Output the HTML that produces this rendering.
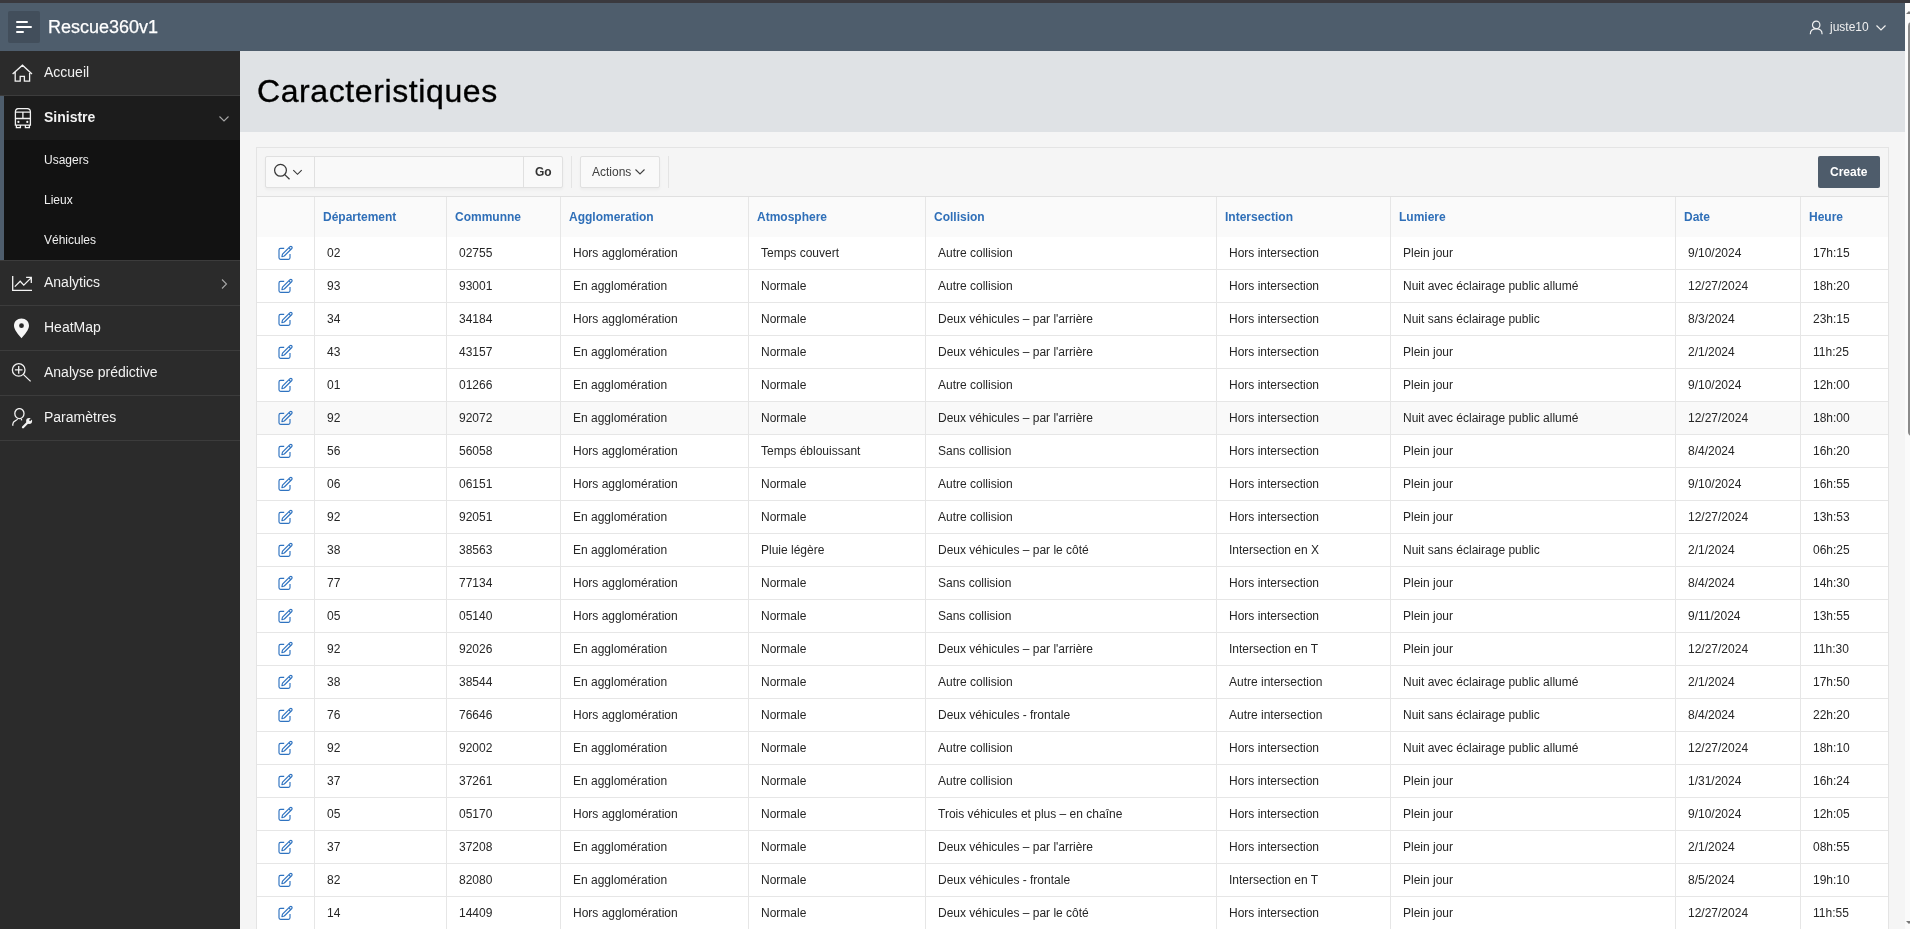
<!DOCTYPE html><html><head><meta charset="utf-8"><title>Caracteristiques</title><style>*{box-sizing:border-box}
html,body{margin:0;padding:0}
body{will-change:transform;width:1910px;height:929px;overflow:hidden;position:relative;background:#f5f5f5;font-family:"Liberation Sans",sans-serif;}
.abs{position:absolute}
#topstrip{position:absolute;left:0;top:0;width:1910px;height:3px;background:#3a393e}
#header{position:absolute;left:0;top:3px;width:1905px;height:48px;background:#4e5d6c}
#burger{position:absolute;left:8px;top:8px;width:32px;height:32px;background:#424e5b;border-radius:2px}
#burger i{position:absolute;left:8px;height:2px;background:#fff;border-radius:1px}
#brand{position:absolute;left:48px;top:9px;font-size:18px;line-height:30px;color:#fff;-webkit-text-stroke:0.25px #fff;white-space:nowrap}
#user{position:absolute;left:1830px;top:14px;font-size:12px;line-height:20px;color:#f0f0f0}
#side{position:absolute;left:0;top:51px;width:240px;height:878px;background:#2b2b2b}
.nav{position:absolute;left:0;width:240px;height:45px;border-bottom:1px solid #3c3c3c;color:#f2f2f2;font-size:14px}
.nav .lbl{position:absolute;left:44px;top:-1px;line-height:44px;white-space:nowrap}
.nav svg{position:absolute}
.sub{position:absolute;left:44px;font-size:12px;line-height:40px;color:#f0f0f0;white-space:nowrap}
#titlebar{position:absolute;left:240px;top:51px;width:1665px;height:81px;background:#dfe2e5}
#title{position:absolute;left:257px;top:66px;font-size:32px;line-height:50px;color:#000;letter-spacing:0.6px;-webkit-text-stroke:0.35px #000;white-space:nowrap}
#region{position:absolute;left:256px;top:147px;width:1633px;height:800px;border:1px solid #e4e4e4;background:#f5f5f5}
#scroll{position:absolute;left:1905px;top:3px;width:5px;height:926px;background:#fbfbfb}
#thumb{position:absolute;left:1908px;top:22px;width:8px;height:414px;background:#8a8a8a;border-radius:4px}
.hdr{position:absolute;left:257px;top:196px;width:1631px;height:41px;background:#fafafa;border-top:1px solid #e0e0e0}
.th{position:absolute;top:197px;line-height:40px;font-size:12px;font-weight:bold;color:#2f6fb8;white-space:nowrap}
.vl{position:absolute;top:197px;width:1px;height:732px;background:#e6e6e6;z-index:3}
.row{position:absolute;left:257px;width:1631px;height:33px;background:#fff;border-bottom:1px solid #e6e6e6}
.row.hov{background:#f9f9f9}
.td{position:absolute;top:0;line-height:32px;font-size:12px;color:#262626;white-space:nowrap;margin-left:-257px}

.ed{position:absolute;left:20px;top:8px;width:18px;height:16px}
.ed svg{display:block}
.tb{position:absolute;height:31px;border:1px solid #e0e0e0;background:#f9f9f9;border-radius:2px;box-shadow:0 2px 3px rgba(0,0,0,.035)}
</style></head><body><div id="topstrip"></div>
<div id="header">
  <div id="burger"><i style="top:10px;width:12px"></i><i style="top:15px;width:16px"></i><i style="top:20px;width:8px"></i></div>
  <div id="brand">Rescue360v1</div>
  <svg class="abs" style="left:1809px;top:17px" width="15" height="16" viewBox="0 0 15 16" fill="none" stroke="#f0f0f0" stroke-width="1.2"><circle cx="7.2" cy="4.9" r="3.7"/><path d="M1.3 14.2Q1.3 9 7.2 8.7Q13.1 9 13.1 14.2"/></svg>
  <div id="user">juste10</div>
  <svg class="abs" style="left:1876px;top:22px" width="10" height="6" viewBox="0 0 10 6" fill="none" stroke="#f0f0f0" stroke-width="1.2"><path d="M0.5 0.5L5 5L9.5 0.5"/></svg>
</div>
<div id="side">
  <div class="nav" style="top:0;background:#2b2b2b">
    <svg style="left:12px;top:13px" width="21" height="19" viewBox="0 0 21 19" fill="none" stroke="#f2f2f2" stroke-width="1.3"><path d="M0.6 9.9L10.46 1.2L20 9.9M3.2 7.6V17.2H8.2V12.3H12.4V17.2H17.6V7.6"/></svg>
    <span class="lbl">Accueil</span>
  </div>
  <div class="abs" style="left:0;top:45px;width:240px;height:164px;background:#121212"></div>
  <div class="abs" style="left:0;top:45px;width:4px;height:164px;background:#4e5d6c"></div>
  <div class="nav" style="top:45px;left:4px;width:236px;height:44px;border:0;background:#1c1c1c">
    <svg style="left:10px;top:12px" width="18" height="21" viewBox="0 0 18 21" fill="none" stroke="#f2f2f2" stroke-width="1.3"><path d="M1.4 17.1V4Q1.4 0.6 4.6 0.6H13.2Q16.4 0.6 16.4 4V17.1Z"/><path d="M1.4 4.1H16.4M1.4 10.5H16.4M8.9 4.1V10.5"/><path d="M2.4 17.1V19.6H6.4V17.1M11.4 17.1V19.6H15.4V17.1"/><circle cx="4.4" cy="13.9" r="1.1" fill="#f2f2f2" stroke="none"/><circle cx="13.3" cy="13.9" r="1.1" fill="#f2f2f2" stroke="none"/></svg>
    <span class="lbl" style="left:40px;font-weight:bold">Sinistre</span>
    <svg style="left:215px;top:20px" width="10" height="6" viewBox="0 0 10 6" fill="none" stroke="#a6a6a6" stroke-width="1.1"><path d="M0.5 0.5L5 5L9.5 0.5"/></svg>
  </div>
  <span class="sub" style="top:89px">Usagers</span>
  <span class="sub" style="top:129px">Lieux</span>
  <span class="sub" style="top:169px">Véhicules</span>
  <div class="abs" style="left:0;top:209px;width:240px;height:1px;background:#3c3c3c"></div>
  <div class="nav" style="top:210px">
    <svg style="left:12px;top:15px" width="21" height="16" viewBox="0 0 21 16" fill="none" stroke="#f4f4f4" stroke-width="1.3"><path d="M0.7 0V14.3H20"/><path d="M2.8 10.6L8.2 5.3L11.8 9.1L19.3 1.6M14.1 1.4H19.3V7"/></svg>
    <span class="lbl">Analytics</span>
    <svg style="left:221px;top:18px" width="7" height="10" viewBox="0 0 7 10" fill="none" stroke="#a6a6a6" stroke-width="1.1"><path d="M1 0.5L5.5 5L1 9.5"/></svg>
  </div>
  <div class="nav" style="top:255px">
    <svg style="left:13px;top:12px" width="17" height="21" viewBox="0 0 17 21" ><path fill="#f7f7f7" d="M8.5 0.5C4.2 0.5 1 3.6 1 7.7C1 11.8 5.3 16.2 8.5 20.3C11.7 16.2 16 11.8 16 7.7C16 3.6 12.8 0.5 8.5 0.5ZM8.5 5.3A2.4 2.4 0 1 1 8.5 10.1A2.4 2.4 0 1 1 8.5 5.3Z"/></svg>
    <span class="lbl">HeatMap</span>
  </div>
  <div class="nav" style="top:300px">
    <svg style="left:11px;top:11px" width="21" height="21" viewBox="0 0 21 21" fill="none" stroke="#f2f2f2" stroke-width="1.3"><circle cx="7.7" cy="7.9" r="6.3"/><path d="M12.3 12.4L19.6 19.4M7.7 4.1V11.7M3.9 7.9H11.5"/></svg>
    <span class="lbl">Analyse prédictive</span>
  </div>
  <div class="nav" style="top:345px">
    <svg style="left:12px;top:12px" width="21" height="21" viewBox="0 0 21 21" fill="none" stroke="#f2f2f2" stroke-width="1.3"><ellipse cx="7.4" cy="5.6" rx="4.6" ry="5"/><path d="M5.6 10.9Q5.3 11.8 3.5 12.6Q0.9 13.8 0.8 16.2V17.8"/><path d="M9.4 10.8L9.6 12.4"/><path d="M11 19.2L15.2 15" stroke-width="2.3" stroke-linecap="round"/><circle cx="17.1" cy="13.1" r="3" fill="#f2f2f2" stroke="none"/><path d="M17.5 12.7L20.6 9.6" stroke="#2b2b2b" stroke-width="1.7"/></svg>
    <span class="lbl">Paramètres</span>
  </div>
</div>
<div id="titlebar"></div>
<div id="title">Caracteristiques</div>
<div id="region"></div>
<div class="tb" style="left:265px;top:156px;width:298px;height:32px;background:#f9f9f9"></div>
<div class="abs" style="left:314px;top:157px;width:1px;height:30px;background:#e0e0e0"></div>
<div class="abs" style="left:523px;top:157px;width:1px;height:30px;background:#e0e0e0"></div>
<svg class="abs" style="left:273px;top:163px" width="30" height="18" viewBox="0 0 30 18" fill="none" stroke="#383838" stroke-width="1.25"><circle cx="7.5" cy="7.3" r="5.9"/><path d="M11.8 11.6L16.5 16.3"/><path d="M20.3 7.2L24.5 11.3L28.7 7.2" stroke-width="1.15"/></svg>
<span class="abs" style="left:535px;top:162px;font-size:12px;line-height:20px;font-weight:bold;color:#333">Go</span>
<div class="abs" style="left:571px;top:156px;width:1px;height:32px;background:#e4e4e4"></div>
<div class="tb" style="left:580px;top:156px;width:80px;height:32px"></div>
<span class="abs" style="left:592px;top:162px;font-size:12px;line-height:20px;color:#404040">Actions</span>
<svg class="abs" style="left:635px;top:169px" width="10" height="6" viewBox="0 0 10 6" fill="none" stroke="#404040" stroke-width="1.1"><path d="M0.5 0.5L5 5L9.5 0.5"/></svg>
<div class="abs" style="left:668px;top:156px;width:1px;height:32px;background:#e4e4e4"></div>
<div class="abs" style="left:1818px;top:156px;width:62px;height:32px;background:#4e5c6b;border-radius:2px"></div>
<span class="abs" style="left:1830px;top:162px;font-size:12px;line-height:20px;font-weight:bold;color:#fff">Create</span>
<div id="scroll"></div>
<div id="thumb"></div>
<svg class="abs" style="left:1906px;top:920px" width="4" height="5" viewBox="0 0 4 5"><path d="M0 1L3 4L4 3V1Z" fill="#777"/></svg>
<svg class="abs" style="left:1906px;top:10px" width="4" height="5" viewBox="0 0 4 5"><path d="M0 4L3 1L4 2V4Z" fill="#777"/></svg>
<div class="hdr"></div><span class="th" style="left:323px">Département</span><span class="th" style="left:455px">Communne</span><span class="th" style="left:569px">Agglomeration</span><span class="th" style="left:757px">Atmosphere</span><span class="th" style="left:934px">Collision</span><span class="th" style="left:1225px">Intersection</span><span class="th" style="left:1399px">Lumiere</span><span class="th" style="left:1684px">Date</span><span class="th" style="left:1809px">Heure</span><div class="vl" style="left:314px"></div><div class="vl" style="left:446px"></div><div class="vl" style="left:560px"></div><div class="vl" style="left:748px"></div><div class="vl" style="left:925px"></div><div class="vl" style="left:1216px"></div><div class="vl" style="left:1390px"></div><div class="vl" style="left:1675px"></div><div class="vl" style="left:1800px"></div><div class="row" style="top:237px"><span class="ed"><svg width="18" height="16" viewBox="0 0 18 16" fill="none" stroke="#2f73c0" stroke-width="1.15" stroke-linejoin="round"><path d="M7.2 3.4H3.6Q2 3.4 2 5V12.8Q2 14.3 3.6 14.3H11.5Q13 14.3 13 12.8V9"/><path d="M4.9 11.7L5.5 9.2L13 1.7Q13.9 1 14.8 1.8Q15.5 2.7 14.8 3.5L7.3 11Z"/><path d="M11.9 2.8L13.7 4.6"/></svg></span><span class="td" style="left:327px">02</span><span class="td" style="left:459px">02755</span><span class="td" style="left:573px">Hors agglomération</span><span class="td" style="left:761px">Temps couvert</span><span class="td" style="left:938px">Autre collision</span><span class="td" style="left:1229px">Hors intersection</span><span class="td" style="left:1403px">Plein jour</span><span class="td" style="left:1688px">9/10/2024</span><span class="td" style="left:1813px">17h:15</span></div><div class="row" style="top:270px"><span class="ed"><svg width="18" height="16" viewBox="0 0 18 16" fill="none" stroke="#2f73c0" stroke-width="1.15" stroke-linejoin="round"><path d="M7.2 3.4H3.6Q2 3.4 2 5V12.8Q2 14.3 3.6 14.3H11.5Q13 14.3 13 12.8V9"/><path d="M4.9 11.7L5.5 9.2L13 1.7Q13.9 1 14.8 1.8Q15.5 2.7 14.8 3.5L7.3 11Z"/><path d="M11.9 2.8L13.7 4.6"/></svg></span><span class="td" style="left:327px">93</span><span class="td" style="left:459px">93001</span><span class="td" style="left:573px">En agglomération</span><span class="td" style="left:761px">Normale</span><span class="td" style="left:938px">Autre collision</span><span class="td" style="left:1229px">Hors intersection</span><span class="td" style="left:1403px">Nuit avec éclairage public allumé</span><span class="td" style="left:1688px">12/27/2024</span><span class="td" style="left:1813px">18h:20</span></div><div class="row" style="top:303px"><span class="ed"><svg width="18" height="16" viewBox="0 0 18 16" fill="none" stroke="#2f73c0" stroke-width="1.15" stroke-linejoin="round"><path d="M7.2 3.4H3.6Q2 3.4 2 5V12.8Q2 14.3 3.6 14.3H11.5Q13 14.3 13 12.8V9"/><path d="M4.9 11.7L5.5 9.2L13 1.7Q13.9 1 14.8 1.8Q15.5 2.7 14.8 3.5L7.3 11Z"/><path d="M11.9 2.8L13.7 4.6"/></svg></span><span class="td" style="left:327px">34</span><span class="td" style="left:459px">34184</span><span class="td" style="left:573px">Hors agglomération</span><span class="td" style="left:761px">Normale</span><span class="td" style="left:938px">Deux véhicules – par l'arrière</span><span class="td" style="left:1229px">Hors intersection</span><span class="td" style="left:1403px">Nuit sans éclairage public</span><span class="td" style="left:1688px">8/3/2024</span><span class="td" style="left:1813px">23h:15</span></div><div class="row" style="top:336px"><span class="ed"><svg width="18" height="16" viewBox="0 0 18 16" fill="none" stroke="#2f73c0" stroke-width="1.15" stroke-linejoin="round"><path d="M7.2 3.4H3.6Q2 3.4 2 5V12.8Q2 14.3 3.6 14.3H11.5Q13 14.3 13 12.8V9"/><path d="M4.9 11.7L5.5 9.2L13 1.7Q13.9 1 14.8 1.8Q15.5 2.7 14.8 3.5L7.3 11Z"/><path d="M11.9 2.8L13.7 4.6"/></svg></span><span class="td" style="left:327px">43</span><span class="td" style="left:459px">43157</span><span class="td" style="left:573px">En agglomération</span><span class="td" style="left:761px">Normale</span><span class="td" style="left:938px">Deux véhicules – par l'arrière</span><span class="td" style="left:1229px">Hors intersection</span><span class="td" style="left:1403px">Plein jour</span><span class="td" style="left:1688px">2/1/2024</span><span class="td" style="left:1813px">11h:25</span></div><div class="row" style="top:369px"><span class="ed"><svg width="18" height="16" viewBox="0 0 18 16" fill="none" stroke="#2f73c0" stroke-width="1.15" stroke-linejoin="round"><path d="M7.2 3.4H3.6Q2 3.4 2 5V12.8Q2 14.3 3.6 14.3H11.5Q13 14.3 13 12.8V9"/><path d="M4.9 11.7L5.5 9.2L13 1.7Q13.9 1 14.8 1.8Q15.5 2.7 14.8 3.5L7.3 11Z"/><path d="M11.9 2.8L13.7 4.6"/></svg></span><span class="td" style="left:327px">01</span><span class="td" style="left:459px">01266</span><span class="td" style="left:573px">En agglomération</span><span class="td" style="left:761px">Normale</span><span class="td" style="left:938px">Autre collision</span><span class="td" style="left:1229px">Hors intersection</span><span class="td" style="left:1403px">Plein jour</span><span class="td" style="left:1688px">9/10/2024</span><span class="td" style="left:1813px">12h:00</span></div><div class="row hov" style="top:402px"><span class="ed"><svg width="18" height="16" viewBox="0 0 18 16" fill="none" stroke="#2f73c0" stroke-width="1.15" stroke-linejoin="round"><path d="M7.2 3.4H3.6Q2 3.4 2 5V12.8Q2 14.3 3.6 14.3H11.5Q13 14.3 13 12.8V9"/><path d="M4.9 11.7L5.5 9.2L13 1.7Q13.9 1 14.8 1.8Q15.5 2.7 14.8 3.5L7.3 11Z"/><path d="M11.9 2.8L13.7 4.6"/></svg></span><span class="td" style="left:327px">92</span><span class="td" style="left:459px">92072</span><span class="td" style="left:573px">En agglomération</span><span class="td" style="left:761px">Normale</span><span class="td" style="left:938px">Deux véhicules – par l'arrière</span><span class="td" style="left:1229px">Hors intersection</span><span class="td" style="left:1403px">Nuit avec éclairage public allumé</span><span class="td" style="left:1688px">12/27/2024</span><span class="td" style="left:1813px">18h:00</span></div><div class="row" style="top:435px"><span class="ed"><svg width="18" height="16" viewBox="0 0 18 16" fill="none" stroke="#2f73c0" stroke-width="1.15" stroke-linejoin="round"><path d="M7.2 3.4H3.6Q2 3.4 2 5V12.8Q2 14.3 3.6 14.3H11.5Q13 14.3 13 12.8V9"/><path d="M4.9 11.7L5.5 9.2L13 1.7Q13.9 1 14.8 1.8Q15.5 2.7 14.8 3.5L7.3 11Z"/><path d="M11.9 2.8L13.7 4.6"/></svg></span><span class="td" style="left:327px">56</span><span class="td" style="left:459px">56058</span><span class="td" style="left:573px">Hors agglomération</span><span class="td" style="left:761px">Temps éblouissant</span><span class="td" style="left:938px">Sans collision</span><span class="td" style="left:1229px">Hors intersection</span><span class="td" style="left:1403px">Plein jour</span><span class="td" style="left:1688px">8/4/2024</span><span class="td" style="left:1813px">16h:20</span></div><div class="row" style="top:468px"><span class="ed"><svg width="18" height="16" viewBox="0 0 18 16" fill="none" stroke="#2f73c0" stroke-width="1.15" stroke-linejoin="round"><path d="M7.2 3.4H3.6Q2 3.4 2 5V12.8Q2 14.3 3.6 14.3H11.5Q13 14.3 13 12.8V9"/><path d="M4.9 11.7L5.5 9.2L13 1.7Q13.9 1 14.8 1.8Q15.5 2.7 14.8 3.5L7.3 11Z"/><path d="M11.9 2.8L13.7 4.6"/></svg></span><span class="td" style="left:327px">06</span><span class="td" style="left:459px">06151</span><span class="td" style="left:573px">Hors agglomération</span><span class="td" style="left:761px">Normale</span><span class="td" style="left:938px">Autre collision</span><span class="td" style="left:1229px">Hors intersection</span><span class="td" style="left:1403px">Plein jour</span><span class="td" style="left:1688px">9/10/2024</span><span class="td" style="left:1813px">16h:55</span></div><div class="row" style="top:501px"><span class="ed"><svg width="18" height="16" viewBox="0 0 18 16" fill="none" stroke="#2f73c0" stroke-width="1.15" stroke-linejoin="round"><path d="M7.2 3.4H3.6Q2 3.4 2 5V12.8Q2 14.3 3.6 14.3H11.5Q13 14.3 13 12.8V9"/><path d="M4.9 11.7L5.5 9.2L13 1.7Q13.9 1 14.8 1.8Q15.5 2.7 14.8 3.5L7.3 11Z"/><path d="M11.9 2.8L13.7 4.6"/></svg></span><span class="td" style="left:327px">92</span><span class="td" style="left:459px">92051</span><span class="td" style="left:573px">En agglomération</span><span class="td" style="left:761px">Normale</span><span class="td" style="left:938px">Autre collision</span><span class="td" style="left:1229px">Hors intersection</span><span class="td" style="left:1403px">Plein jour</span><span class="td" style="left:1688px">12/27/2024</span><span class="td" style="left:1813px">13h:53</span></div><div class="row" style="top:534px"><span class="ed"><svg width="18" height="16" viewBox="0 0 18 16" fill="none" stroke="#2f73c0" stroke-width="1.15" stroke-linejoin="round"><path d="M7.2 3.4H3.6Q2 3.4 2 5V12.8Q2 14.3 3.6 14.3H11.5Q13 14.3 13 12.8V9"/><path d="M4.9 11.7L5.5 9.2L13 1.7Q13.9 1 14.8 1.8Q15.5 2.7 14.8 3.5L7.3 11Z"/><path d="M11.9 2.8L13.7 4.6"/></svg></span><span class="td" style="left:327px">38</span><span class="td" style="left:459px">38563</span><span class="td" style="left:573px">En agglomération</span><span class="td" style="left:761px">Pluie légère</span><span class="td" style="left:938px">Deux véhicules – par le côté</span><span class="td" style="left:1229px">Intersection en X</span><span class="td" style="left:1403px">Nuit sans éclairage public</span><span class="td" style="left:1688px">2/1/2024</span><span class="td" style="left:1813px">06h:25</span></div><div class="row" style="top:567px"><span class="ed"><svg width="18" height="16" viewBox="0 0 18 16" fill="none" stroke="#2f73c0" stroke-width="1.15" stroke-linejoin="round"><path d="M7.2 3.4H3.6Q2 3.4 2 5V12.8Q2 14.3 3.6 14.3H11.5Q13 14.3 13 12.8V9"/><path d="M4.9 11.7L5.5 9.2L13 1.7Q13.9 1 14.8 1.8Q15.5 2.7 14.8 3.5L7.3 11Z"/><path d="M11.9 2.8L13.7 4.6"/></svg></span><span class="td" style="left:327px">77</span><span class="td" style="left:459px">77134</span><span class="td" style="left:573px">Hors agglomération</span><span class="td" style="left:761px">Normale</span><span class="td" style="left:938px">Sans collision</span><span class="td" style="left:1229px">Hors intersection</span><span class="td" style="left:1403px">Plein jour</span><span class="td" style="left:1688px">8/4/2024</span><span class="td" style="left:1813px">14h:30</span></div><div class="row" style="top:600px"><span class="ed"><svg width="18" height="16" viewBox="0 0 18 16" fill="none" stroke="#2f73c0" stroke-width="1.15" stroke-linejoin="round"><path d="M7.2 3.4H3.6Q2 3.4 2 5V12.8Q2 14.3 3.6 14.3H11.5Q13 14.3 13 12.8V9"/><path d="M4.9 11.7L5.5 9.2L13 1.7Q13.9 1 14.8 1.8Q15.5 2.7 14.8 3.5L7.3 11Z"/><path d="M11.9 2.8L13.7 4.6"/></svg></span><span class="td" style="left:327px">05</span><span class="td" style="left:459px">05140</span><span class="td" style="left:573px">Hors agglomération</span><span class="td" style="left:761px">Normale</span><span class="td" style="left:938px">Sans collision</span><span class="td" style="left:1229px">Hors intersection</span><span class="td" style="left:1403px">Plein jour</span><span class="td" style="left:1688px">9/11/2024</span><span class="td" style="left:1813px">13h:55</span></div><div class="row" style="top:633px"><span class="ed"><svg width="18" height="16" viewBox="0 0 18 16" fill="none" stroke="#2f73c0" stroke-width="1.15" stroke-linejoin="round"><path d="M7.2 3.4H3.6Q2 3.4 2 5V12.8Q2 14.3 3.6 14.3H11.5Q13 14.3 13 12.8V9"/><path d="M4.9 11.7L5.5 9.2L13 1.7Q13.9 1 14.8 1.8Q15.5 2.7 14.8 3.5L7.3 11Z"/><path d="M11.9 2.8L13.7 4.6"/></svg></span><span class="td" style="left:327px">92</span><span class="td" style="left:459px">92026</span><span class="td" style="left:573px">En agglomération</span><span class="td" style="left:761px">Normale</span><span class="td" style="left:938px">Deux véhicules – par l'arrière</span><span class="td" style="left:1229px">Intersection en T</span><span class="td" style="left:1403px">Plein jour</span><span class="td" style="left:1688px">12/27/2024</span><span class="td" style="left:1813px">11h:30</span></div><div class="row" style="top:666px"><span class="ed"><svg width="18" height="16" viewBox="0 0 18 16" fill="none" stroke="#2f73c0" stroke-width="1.15" stroke-linejoin="round"><path d="M7.2 3.4H3.6Q2 3.4 2 5V12.8Q2 14.3 3.6 14.3H11.5Q13 14.3 13 12.8V9"/><path d="M4.9 11.7L5.5 9.2L13 1.7Q13.9 1 14.8 1.8Q15.5 2.7 14.8 3.5L7.3 11Z"/><path d="M11.9 2.8L13.7 4.6"/></svg></span><span class="td" style="left:327px">38</span><span class="td" style="left:459px">38544</span><span class="td" style="left:573px">En agglomération</span><span class="td" style="left:761px">Normale</span><span class="td" style="left:938px">Autre collision</span><span class="td" style="left:1229px">Autre intersection</span><span class="td" style="left:1403px">Nuit avec éclairage public allumé</span><span class="td" style="left:1688px">2/1/2024</span><span class="td" style="left:1813px">17h:50</span></div><div class="row" style="top:699px"><span class="ed"><svg width="18" height="16" viewBox="0 0 18 16" fill="none" stroke="#2f73c0" stroke-width="1.15" stroke-linejoin="round"><path d="M7.2 3.4H3.6Q2 3.4 2 5V12.8Q2 14.3 3.6 14.3H11.5Q13 14.3 13 12.8V9"/><path d="M4.9 11.7L5.5 9.2L13 1.7Q13.9 1 14.8 1.8Q15.5 2.7 14.8 3.5L7.3 11Z"/><path d="M11.9 2.8L13.7 4.6"/></svg></span><span class="td" style="left:327px">76</span><span class="td" style="left:459px">76646</span><span class="td" style="left:573px">Hors agglomération</span><span class="td" style="left:761px">Normale</span><span class="td" style="left:938px">Deux véhicules - frontale</span><span class="td" style="left:1229px">Autre intersection</span><span class="td" style="left:1403px">Nuit sans éclairage public</span><span class="td" style="left:1688px">8/4/2024</span><span class="td" style="left:1813px">22h:20</span></div><div class="row" style="top:732px"><span class="ed"><svg width="18" height="16" viewBox="0 0 18 16" fill="none" stroke="#2f73c0" stroke-width="1.15" stroke-linejoin="round"><path d="M7.2 3.4H3.6Q2 3.4 2 5V12.8Q2 14.3 3.6 14.3H11.5Q13 14.3 13 12.8V9"/><path d="M4.9 11.7L5.5 9.2L13 1.7Q13.9 1 14.8 1.8Q15.5 2.7 14.8 3.5L7.3 11Z"/><path d="M11.9 2.8L13.7 4.6"/></svg></span><span class="td" style="left:327px">92</span><span class="td" style="left:459px">92002</span><span class="td" style="left:573px">En agglomération</span><span class="td" style="left:761px">Normale</span><span class="td" style="left:938px">Autre collision</span><span class="td" style="left:1229px">Hors intersection</span><span class="td" style="left:1403px">Nuit avec éclairage public allumé</span><span class="td" style="left:1688px">12/27/2024</span><span class="td" style="left:1813px">18h:10</span></div><div class="row" style="top:765px"><span class="ed"><svg width="18" height="16" viewBox="0 0 18 16" fill="none" stroke="#2f73c0" stroke-width="1.15" stroke-linejoin="round"><path d="M7.2 3.4H3.6Q2 3.4 2 5V12.8Q2 14.3 3.6 14.3H11.5Q13 14.3 13 12.8V9"/><path d="M4.9 11.7L5.5 9.2L13 1.7Q13.9 1 14.8 1.8Q15.5 2.7 14.8 3.5L7.3 11Z"/><path d="M11.9 2.8L13.7 4.6"/></svg></span><span class="td" style="left:327px">37</span><span class="td" style="left:459px">37261</span><span class="td" style="left:573px">En agglomération</span><span class="td" style="left:761px">Normale</span><span class="td" style="left:938px">Autre collision</span><span class="td" style="left:1229px">Hors intersection</span><span class="td" style="left:1403px">Plein jour</span><span class="td" style="left:1688px">1/31/2024</span><span class="td" style="left:1813px">16h:24</span></div><div class="row" style="top:798px"><span class="ed"><svg width="18" height="16" viewBox="0 0 18 16" fill="none" stroke="#2f73c0" stroke-width="1.15" stroke-linejoin="round"><path d="M7.2 3.4H3.6Q2 3.4 2 5V12.8Q2 14.3 3.6 14.3H11.5Q13 14.3 13 12.8V9"/><path d="M4.9 11.7L5.5 9.2L13 1.7Q13.9 1 14.8 1.8Q15.5 2.7 14.8 3.5L7.3 11Z"/><path d="M11.9 2.8L13.7 4.6"/></svg></span><span class="td" style="left:327px">05</span><span class="td" style="left:459px">05170</span><span class="td" style="left:573px">Hors agglomération</span><span class="td" style="left:761px">Normale</span><span class="td" style="left:938px">Trois véhicules et plus – en chaîne</span><span class="td" style="left:1229px">Hors intersection</span><span class="td" style="left:1403px">Plein jour</span><span class="td" style="left:1688px">9/10/2024</span><span class="td" style="left:1813px">12h:05</span></div><div class="row" style="top:831px"><span class="ed"><svg width="18" height="16" viewBox="0 0 18 16" fill="none" stroke="#2f73c0" stroke-width="1.15" stroke-linejoin="round"><path d="M7.2 3.4H3.6Q2 3.4 2 5V12.8Q2 14.3 3.6 14.3H11.5Q13 14.3 13 12.8V9"/><path d="M4.9 11.7L5.5 9.2L13 1.7Q13.9 1 14.8 1.8Q15.5 2.7 14.8 3.5L7.3 11Z"/><path d="M11.9 2.8L13.7 4.6"/></svg></span><span class="td" style="left:327px">37</span><span class="td" style="left:459px">37208</span><span class="td" style="left:573px">En agglomération</span><span class="td" style="left:761px">Normale</span><span class="td" style="left:938px">Deux véhicules – par l'arrière</span><span class="td" style="left:1229px">Hors intersection</span><span class="td" style="left:1403px">Plein jour</span><span class="td" style="left:1688px">2/1/2024</span><span class="td" style="left:1813px">08h:55</span></div><div class="row" style="top:864px"><span class="ed"><svg width="18" height="16" viewBox="0 0 18 16" fill="none" stroke="#2f73c0" stroke-width="1.15" stroke-linejoin="round"><path d="M7.2 3.4H3.6Q2 3.4 2 5V12.8Q2 14.3 3.6 14.3H11.5Q13 14.3 13 12.8V9"/><path d="M4.9 11.7L5.5 9.2L13 1.7Q13.9 1 14.8 1.8Q15.5 2.7 14.8 3.5L7.3 11Z"/><path d="M11.9 2.8L13.7 4.6"/></svg></span><span class="td" style="left:327px">82</span><span class="td" style="left:459px">82080</span><span class="td" style="left:573px">En agglomération</span><span class="td" style="left:761px">Normale</span><span class="td" style="left:938px">Deux véhicules - frontale</span><span class="td" style="left:1229px">Intersection en T</span><span class="td" style="left:1403px">Plein jour</span><span class="td" style="left:1688px">8/5/2024</span><span class="td" style="left:1813px">19h:10</span></div><div class="row" style="top:897px"><span class="ed"><svg width="18" height="16" viewBox="0 0 18 16" fill="none" stroke="#2f73c0" stroke-width="1.15" stroke-linejoin="round"><path d="M7.2 3.4H3.6Q2 3.4 2 5V12.8Q2 14.3 3.6 14.3H11.5Q13 14.3 13 12.8V9"/><path d="M4.9 11.7L5.5 9.2L13 1.7Q13.9 1 14.8 1.8Q15.5 2.7 14.8 3.5L7.3 11Z"/><path d="M11.9 2.8L13.7 4.6"/></svg></span><span class="td" style="left:327px">14</span><span class="td" style="left:459px">14409</span><span class="td" style="left:573px">Hors agglomération</span><span class="td" style="left:761px">Normale</span><span class="td" style="left:938px">Deux véhicules – par le côté</span><span class="td" style="left:1229px">Hors intersection</span><span class="td" style="left:1403px">Plein jour</span><span class="td" style="left:1688px">12/27/2024</span><span class="td" style="left:1813px">11h:55</span></div></body></html>
